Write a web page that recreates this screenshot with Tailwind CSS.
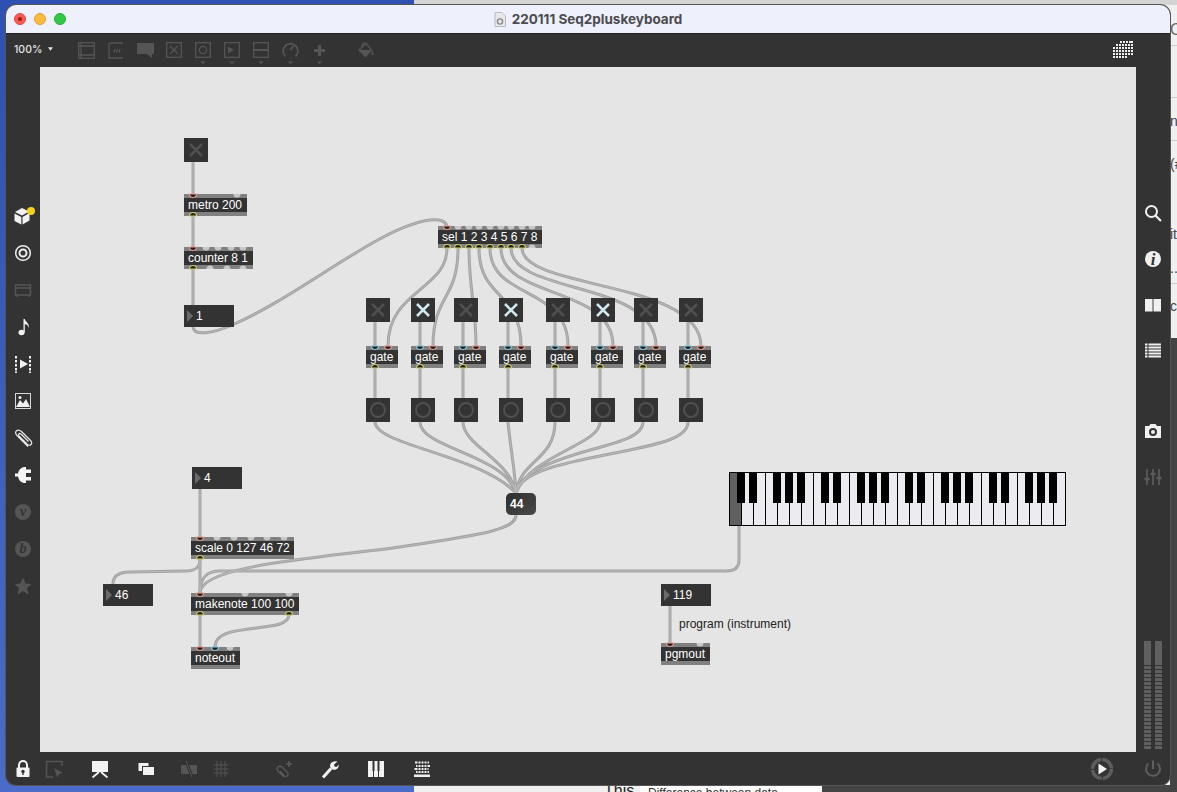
<!DOCTYPE html>
<html><head><meta charset="utf-8"><script src="https://cdn.jsdelivr.net/npm/@tailwindcss/browser@4"></script></head>
<body class="font-['Liberation_Sans',sans-serif]">
<div class="relative w-[1177px] h-[792px] overflow-hidden bg-linear-to-b from-[#2e50b2] to-[#4a6cc8]">
  <!-- window behind -->
  <div class="absolute left-[414px] top-0 w-[763px] h-[792px] bg-[#f0f0f0]">
    <div class="h-[5px] bg-[#d4d4d4]"></div>
    <div class="absolute left-[756px] top-[18px] text-[16px] text-[#666]">C</div>
    <div class="absolute left-[756px] top-[111px] text-[14px] text-[#444]">n</div>
    <div class="absolute left-[756px] top-[154px] text-[14px] text-[#444]">(#</div>
    <div class="absolute left-[756px] top-[224px] text-[14px] text-[#444]">it</div>
    <div class="absolute left-[756px] top-[258px] text-[14px] text-[#444]">...</div>
    <div class="absolute left-[756px] top-[296px] text-[14px] text-[#444]">ce</div>
    <div class="absolute left-[756px] top-[45px] w-[7px] h-px bg-[#ccc]"></div>
    <div class="absolute left-[756px] top-[97px] w-[7px] h-px bg-[#ccc]"></div>
    <div class="absolute left-[756px] top-[140px] w-[7px] h-px bg-[#ccc]"></div>
    <div class="absolute left-[756px] top-[283px] w-[7px] h-px bg-[#ccc]"></div>
    <div class="absolute left-[756px] top-[338px] w-[7px] h-[454px] bg-[#444]"></div>
    <div class="absolute left-[408px] top-[785px] w-[355px] h-[7px] bg-[#444]"></div>
    <div class="absolute left-[190px] top-[779px] text-[16px] text-[#222]">This</div>
    <div class="absolute left-[226px] top-[785px] w-[182px] h-[7px] bg-white border-t border-[#bbb] overflow-hidden"><div class="pl-2 text-[12px] leading-[14px] text-[#333] whitespace-nowrap">Difference between data</div></div>
  </div>

  <!-- main window -->
  <div class="absolute left-[6px] top-[5px] w-[1164px] h-[780px] rounded-[10px] overflow-hidden flex flex-col bg-[#333] shadow-[0_0_0_1px_#555]">
    <!-- title bar -->
    <div class="relative h-[29px] bg-[#eef1fb] border-b border-[#222] flex items-center justify-center shrink-0">
      <div class="absolute left-[8px] top-[8px] flex gap-[8px]">
        <div class="w-3 h-3 rounded-full bg-[#fc5753] border border-[#df4744] flex items-center justify-center"><div class="w-1 h-1 rounded-full bg-[#8f1d18]"></div></div>
        <div class="w-3 h-3 rounded-full bg-[#fdbc40] border border-[#de9f34]"></div>
        <div class="w-3 h-3 rounded-full bg-[#33c748] border border-[#27aa35]"></div>
      </div>
      <svg class="w-3 h-[15px] mr-[6px]" viewBox="0 0 12 15"><path d="M1 .5H8L11.500 4V14.500H1Z" fill="#e8e8ec" stroke="#bbb"/><circle cx="6" cy="9.500" r="2.600" fill="none" stroke="#888" stroke-width="1.400"/></svg>
      <span class="font-['Inter',sans-serif] font-bold text-[13.5px] text-[#4b4b50]">220111 Seq2pluskeyboard</span>
    </div>
    <!-- toolbar -->
    <div class="h-[33px] bg-[#333] flex items-start shrink-0 relative">
      <div class="ml-[8px] mt-[9px] w-[28px] text-[10.5px] font-medium leading-[14px] text-[#e4e4e4] font-['Inter',sans-serif]">100%</div>
      <svg class="ml-[6px] mt-[13px] w-[5px] h-[4px]" viewBox="0 0 7 5"><path d="M0 0H7L3.500 5Z" fill="#e4e4e4"/></svg>
      <svg class="ml-[25px] mt-[8px] w-[17px] h-[17px]" viewBox="0 0 17 17" fill="none" stroke="#555" stroke-width="1.300"><rect x=".7" y=".7" width="15.600" height="15.600"/><path d="M.7 4H16.300M.7 13H16.300M3 1V16" /></svg>
      <svg class="ml-[13px] mt-[8px] w-[16px] h-[17px]" viewBox="0 0 16 17" fill="none" stroke="#555" stroke-width="1.300"><path d="M15 1H3Q1 1 1 3V16H15"/><path d="M6 10.500L7 7M8.500 10.500L9.500 7M11 10.500L12 7"/></svg>
      <svg class="ml-[13px] mt-[9px] w-[17px] h-[16px]" viewBox="0 0 17 16"><path d="M0 0H17V11H15V15L10 11H0Z" fill="#555"/></svg>
      <svg class="ml-[12px] mt-[8px] w-[16px] h-[16px]" viewBox="0 0 16 16" fill="none" stroke="#555" stroke-width="1.300"><rect x=".7" y=".7" width="14.600" height="14.600"/><path d="M4 4L12 12M12 4L4 12"/></svg>
      <svg class="ml-[13px] mt-[8px] w-[16px] h-[22px]" viewBox="0 0 16 22" fill="none" stroke="#555" stroke-width="1.300"><rect x=".7" y=".7" width="14.600" height="14.600"/><circle cx="8" cy="8" r="3.600"/><path d="M5 19.500H11L8 22Z" fill="#555" stroke="none"/></svg>
      <svg class="ml-[13px] mt-[8px] w-[16px] h-[22px]" viewBox="0 0 16 22" fill="none" stroke="#555" stroke-width="1.300"><rect x=".7" y=".7" width="14.600" height="14.600"/><path d="M4 4.500L10 8L4 11.500Z" fill="#555" stroke="none"/><path d="M5 19.500H11L8 22Z" fill="#555" stroke="none"/></svg>
      <svg class="ml-[13px] mt-[8px] w-[16px] h-[22px]" viewBox="0 0 16 22" fill="none" stroke="#555" stroke-width="1.300"><rect x=".7" y=".7" width="14.600" height="14.600"/><path d="M1 8H15" stroke-width="1.800"/><path d="M5 19.500H11L8 22Z" fill="#555" stroke="none"/></svg>
      <svg class="ml-[13px] mt-[8px] w-[17px] h-[22px]" viewBox="0 0 17 22" fill="none" stroke="#555" stroke-width="1.800"><path d="M3.500 14.500A7.400 7.400 0 1 1 13.500 14.500"/><path d="M8.500 8L11.500 3.500"/><path d="M5.500 19.500H11.500L8.500 22Z" fill="#555" stroke="none"/></svg>
      <svg class="ml-[15px] mt-[11px] w-[11px] h-[19px]" viewBox="0 0 11 19"><path d="M4 0H7V4H11V7H7V11H4V7H0V4H4Z" fill="#555"/><path d="M2.500 16.500H8.500L5.500 19Z" fill="#555"/></svg>
      <svg class="ml-[33px] mt-[8px] w-[16px] h-[16px]" viewBox="0 0 16 16"><path d="M1 8L8 1.500L13.500 8L7.500 14.500Z" fill="none" stroke="#555" stroke-width="1.300"/><path d="M1 8L13.500 8L7.500 15Z" fill="#555"/><path d="M4 5V3A3 3 0 0 1 9 2" fill="none" stroke="#555" stroke-width="1.200"/><path d="M14.500 8.500Q16.500 12 14.500 13.500Q12.500 12 14.500 8.500Z" fill="#555"/></svg>
      <svg class="absolute left-[1107px] top-[7px] w-[20px] h-[19px]" viewBox="0 0 20 19" fill="#eee"><g id="gr"><rect x="7" y="0" width="2" height="2"/><rect x="10" y="0" width="2" height="2"/><rect x="13" y="0" width="2" height="2"/><rect x="16" y="0" width="2" height="2"/><rect x="18" y="0" width="2" height="2"/></g><g id="gr2"><rect x="3" y="3" width="2" height="2"/><rect x="6" y="3" width="2" height="2"/><rect x="9" y="3" width="2" height="2"/><rect x="12" y="3" width="2" height="2"/><rect x="15" y="3" width="2" height="2"/><rect x="18" y="3" width="2" height="2"/></g><use href="#gr2" y="3"/><use href="#gr2" y="6"/><use href="#gr2" x="-3" y="3"/><use href="#gr2" x="-3" y="6"/><use href="#gr2" x="-3" y="9"/><use href="#gr2" y="9"/><rect x="0" y="15" width="2" height="2"/><rect x="3" y="15" width="2" height="2"/><rect x="6" y="15" width="2" height="2"/><rect x="9" y="15" width="2" height="2"/><rect x="12" y="15" width="2" height="2"/></svg>
    </div>

    <!-- middle -->
    <div class="flex h-[685px] shrink-0">
      <!-- left sidebar -->
      <div class="w-[34px] flex flex-col items-center gap-[13px] pt-[137px]">
        <svg class="w-6 h-6" viewBox="0 0 24 24" fill="#f2f2f2"><path d="M11 4L18 7.500L11 11.500L4 8Z"/><path d="M3.500 9.500L10.300 13V20.500L3.500 17Z"/><path d="M11.500 13L18.500 9V16.500L11.500 20.500Z"/><circle cx="20" cy="7" r="4" fill="#f2d31b"/></svg>
        <svg class="w-6 h-6" viewBox="0 0 24 24" fill="none" stroke="#ececec"><circle cx="12" cy="12" r="7.300" stroke-width="1.500"/><circle cx="12" cy="12" r="3.500" stroke-width="2"/></svg>
        <svg class="w-6 h-6" viewBox="0 0 24 24" fill="none" stroke="#555" stroke-width="1.500"><rect x="4.500" y="7" width="15" height="10"/><path d="M4.500 10H19.500M6 17V19M18 17V19"/></svg>
        <svg class="w-6 h-6" viewBox="0 0 24 24" fill="#f2f2f2"><ellipse cx="10.500" cy="17.500" rx="3" ry="2.800"/><path d="M12.500 4H13.800C14.300 7 18.500 8 18 13C17 10 15.500 9.500 13.800 9V17.500H12.500Z"/></svg>
        <svg class="w-6 h-6" viewBox="0 0 24 24" fill="#f2f2f2"><path d="M9 7.500L17 12L9 16.500Z"/><rect x="4" y="4" width="2" height="2.500"/><rect x="4" y="8" width="2" height="2.500"/><rect x="4" y="12" width="2" height="2.500"/><rect x="4" y="16" width="2" height="2.500"/><rect x="4" y="19.500" width="2" height="1.500"/><rect x="18" y="4" width="2" height="2.500"/><rect x="18" y="8" width="2" height="2.500"/><rect x="18" y="12" width="2" height="2.500"/><rect x="18" y="16" width="2" height="2.500"/><rect x="18" y="19.500" width="2" height="1.500"/></svg>
        <svg class="w-6 h-6" viewBox="0 0 24 24"><rect x="4.500" y="4.500" width="15" height="15" fill="none" stroke="#d8d8d8"/><path d="M5 18L9 11L12 14.500L15 10L19 18Z" fill="#f0f0f0"/><circle cx="9" cy="8.500" r="1.500" fill="#f0f0f0"/></svg>
        <svg class="w-6 h-6" viewBox="0 0 24 24" fill="none" stroke="#e8e8e8" stroke-width="1.200"><path d="M17 20.500L6 9.500Q3.500 6.500 5.500 4.800Q7.500 3 10.500 5.500L20 15Q21.500 17 20 18.500Q18.500 20 16.500 18.500L8 10Q7 8.500 8 7.700Q9 7 10 8L17.500 15.500"/></svg>
        <svg class="w-6 h-6" viewBox="0 0 24 24" fill="#f5f5f5"><path d="M15 4V20H13Q8 19 7 13.500H4V10.500H7Q8 5 13 4Z"/><rect x="15" y="6.500" width="5" height="3.500"/><rect x="15" y="14" width="5" height="3.500"/></svg>
        <div class="w-6 h-6 flex items-center justify-center"><div class="w-4 h-4 rounded-full bg-[#555] flex items-center justify-center font-['Liberation_Serif',serif] font-bold italic text-[14px] leading-none text-[#333]">v</div></div>
        <div class="w-6 h-6 flex items-center justify-center"><div class="w-4 h-4 rounded-full bg-[#555] flex items-center justify-center font-['Liberation_Serif',serif] font-bold italic text-[14px] leading-none text-[#333]">b</div></div>
        <svg class="w-6 h-6" viewBox="0 0 24 24"><path d="M12 3.500L14.500 9.500L20.500 10L16 14L17.500 20.500L12 17L6.500 20.500L8 14L3.500 10L9.500 9.500Z" fill="#555"/></svg>
      </div>

      <!-- canvas -->
      <div class="relative w-[1096px] h-[685px] bg-[#e5e5e5] text-[12px] leading-[14px] text-white">
        <svg class="absolute inset-0 w-full h-full" viewBox="40 67 1096 685" fill="none" stroke-linecap="round">
          <defs>
            <g id="cables">
              <path d="M193 162V194M193 216V247M193 269V305"/>
              <path d="M193 327C194 336 212 334 232 325C300 296 380 226 430 220C440 219 447 221 447 228"/>
              <path d="M447 248C447 290 388 290 388 346M458 248C458 300 433 295 433 346M469 248C469 290 476 305 476 346M479 248C479 300 521 290 521 346M490 248C490 300 568 285 568 346M501 248C501 300 613 285 613 346M511 248C511 295 656 280 656 346M522 248C522 290 701 280 701 346"/>
              <path d="M375 322V346M420 322V346M463 322V346M508 322V346M555 322V346M600 322V346M643 322V346M688 322V346"/>
              <path d="M375 368V398M420 368V398M463 368V398M508 368V398M555 368V398M600 368V398M643 368V398M688 368V398"/>
              <path d="M688 422C688 438 660 444 620 452C570 462 520 470 516 493M643 422C643 436 620 442 590 450C555 460 520 472 516 493M600 422C600 445 530 455 516 493M555 422C555 460 520 460 516 493M508 422C510 445 515 470 516 493M463 422C463 445 510 460 516 493M420 422C420 448 505 455 516 493M375 422C375 445 480 455 516 493"/>
              <path d="M516 515C516 530 480 535 400 547C320 558 200 565 200 593"/>
              <path d="M739 526V560C739 568 734 571 726 571H220C206 571 200 578 200 593"/>
              <path d="M200 489V537M200 559V593M200 615V647M670 606V643"/>
              <path d="M200 559C200 568 195 571 185 571L130 572C118 572 113 576 113 584"/>
              <path d="M289 615C289 635 215 620 215 647"/>
            </g>
          </defs>
          <use href="#cables" stroke="#a2a2a2" stroke-width="3"/>
          <use href="#cables" stroke="#bababa" stroke-width="1"/>
        </svg>

        <!-- symbols -->
        <svg class="absolute w-0 h-0"><defs>
          <g id="xd"><path d="M1 1L13 13M13 1L1 13" stroke="#505050" stroke-width="2.500" fill="none"/></g>
          <g id="xl"><path d="M1 1L13 13M13 1L1 13" stroke="#cfe9ee" stroke-width="2.500" fill="none"/></g>
        </defs></svg>

        <!-- toggles -->
        <div class="absolute left-[144px] top-[71px] w-6 h-6 bg-[#333] flex items-center justify-center"><svg class="w-[14px] h-[14px]"><use href="#xd"/></svg></div>
        <div class="absolute left-[326px] top-[231px] w-6 h-6 bg-[#333] flex items-center justify-center"><svg class="w-[14px] h-[14px]"><use href="#xd"/></svg></div>
        <div class="absolute left-[371px] top-[231px] w-6 h-6 bg-[#333] flex items-center justify-center"><svg class="w-[14px] h-[14px]"><use href="#xl"/></svg></div>
        <div class="absolute left-[414px] top-[231px] w-6 h-6 bg-[#333] flex items-center justify-center"><svg class="w-[14px] h-[14px]"><use href="#xd"/></svg></div>
        <div class="absolute left-[459px] top-[231px] w-6 h-6 bg-[#333] flex items-center justify-center"><svg class="w-[14px] h-[14px]"><use href="#xl"/></svg></div>
        <div class="absolute left-[506px] top-[231px] w-6 h-6 bg-[#333] flex items-center justify-center"><svg class="w-[14px] h-[14px]"><use href="#xd"/></svg></div>
        <div class="absolute left-[551px] top-[231px] w-6 h-6 bg-[#333] flex items-center justify-center"><svg class="w-[14px] h-[14px]"><use href="#xl"/></svg></div>
        <div class="absolute left-[594px] top-[231px] w-6 h-6 bg-[#333] flex items-center justify-center"><svg class="w-[14px] h-[14px]"><use href="#xd"/></svg></div>
        <div class="absolute left-[639px] top-[231px] w-6 h-6 bg-[#333] flex items-center justify-center"><svg class="w-[14px] h-[14px]"><use href="#xd"/></svg></div>

        <!-- buttons -->
        <div class="absolute left-[326px] top-[331px] w-6 h-6 bg-[#333] flex items-center justify-center"><div class="w-4 h-4 rounded-full border-2 border-[#505050]"></div></div>
        <div class="absolute left-[371px] top-[331px] w-6 h-6 bg-[#333] flex items-center justify-center"><div class="w-4 h-4 rounded-full border-2 border-[#505050]"></div></div>
        <div class="absolute left-[414px] top-[331px] w-6 h-6 bg-[#333] flex items-center justify-center"><div class="w-4 h-4 rounded-full border-2 border-[#505050]"></div></div>
        <div class="absolute left-[459px] top-[331px] w-6 h-6 bg-[#333] flex items-center justify-center"><div class="w-4 h-4 rounded-full border-2 border-[#505050]"></div></div>
        <div class="absolute left-[506px] top-[331px] w-6 h-6 bg-[#333] flex items-center justify-center"><div class="w-4 h-4 rounded-full border-2 border-[#505050]"></div></div>
        <div class="absolute left-[551px] top-[331px] w-6 h-6 bg-[#333] flex items-center justify-center"><div class="w-4 h-4 rounded-full border-2 border-[#505050]"></div></div>
        <div class="absolute left-[594px] top-[331px] w-6 h-6 bg-[#333] flex items-center justify-center"><div class="w-4 h-4 rounded-full border-2 border-[#505050]"></div></div>
        <div class="absolute left-[639px] top-[331px] w-6 h-6 bg-[#333] flex items-center justify-center"><div class="w-4 h-4 rounded-full border-2 border-[#505050]"></div></div>

        <!-- objects -->
        <div class="absolute left-[144px] top-[127px] w-[63px] h-[22px] py-1 bg-[#808080]"><div class="h-[14px] bg-[#333] px-1 whitespace-nowrap">metro 200</div></div>
        <div class="absolute left-[144px] top-[180px] w-[69px] h-[22px] py-1 bg-[#808080]"><div class="h-[14px] bg-[#333] px-1 whitespace-nowrap">counter 8 1</div></div>
        <div class="absolute left-[398px] top-[159px] w-[104px] h-[22px] py-1 bg-[#808080]"><div class="h-[14px] bg-[#333] px-1 whitespace-nowrap">sel 1 2 3 4 5 6 7 8</div></div>
        <div class="absolute left-[326px] top-[279px] w-8 h-[22px] py-1 bg-[#808080]"><div class="h-[14px] bg-[#333] px-1">gate</div></div>
        <div class="absolute left-[371px] top-[279px] w-8 h-[22px] py-1 bg-[#808080]"><div class="h-[14px] bg-[#333] px-1">gate</div></div>
        <div class="absolute left-[414px] top-[279px] w-8 h-[22px] py-1 bg-[#808080]"><div class="h-[14px] bg-[#333] px-1">gate</div></div>
        <div class="absolute left-[459px] top-[279px] w-8 h-[22px] py-1 bg-[#808080]"><div class="h-[14px] bg-[#333] px-1">gate</div></div>
        <div class="absolute left-[506px] top-[279px] w-8 h-[22px] py-1 bg-[#808080]"><div class="h-[14px] bg-[#333] px-1">gate</div></div>
        <div class="absolute left-[551px] top-[279px] w-8 h-[22px] py-1 bg-[#808080]"><div class="h-[14px] bg-[#333] px-1">gate</div></div>
        <div class="absolute left-[594px] top-[279px] w-8 h-[22px] py-1 bg-[#808080]"><div class="h-[14px] bg-[#333] px-1">gate</div></div>
        <div class="absolute left-[639px] top-[279px] w-8 h-[22px] py-1 bg-[#808080]"><div class="h-[14px] bg-[#333] px-1">gate</div></div>
        <div class="absolute left-[151px] top-[470px] w-[103px] h-[22px] py-1 bg-[#808080]"><div class="h-[14px] bg-[#333] px-1 whitespace-nowrap">scale 0 127 46 72</div></div>
        <div class="absolute left-[151px] top-[526px] w-[108px] h-[22px] py-1 bg-[#808080]"><div class="h-[14px] bg-[#333] px-1 whitespace-nowrap">makenote 100 100</div></div>
        <div class="absolute left-[151px] top-[580px] w-[49px] h-[22px] py-1 bg-[#808080]"><div class="h-[14px] bg-[#333] px-1">noteout</div></div>
        <div class="absolute left-[621px] top-[576px] w-[49px] h-[22px] py-1 bg-[#808080]"><div class="h-[14px] bg-[#333] px-1">pgmout</div></div>

        <!-- number boxes -->
        <div class="absolute left-[144px] top-[238px] w-[50px] h-[22px] bg-[#333] flex items-center pl-[3px] gap-[3px]"><svg class="w-[6px] h-3" viewBox="0 0 6 12"><path d="M0 0L6 6L0 12Z" fill="#6a6a6a"/></svg><span>1</span></div>
        <div class="absolute left-[152px] top-[400px] w-[50px] h-[22px] bg-[#333] flex items-center pl-[3px] gap-[3px]"><svg class="w-[6px] h-3" viewBox="0 0 6 12"><path d="M0 0L6 6L0 12Z" fill="#6a6a6a"/></svg><span>4</span></div>
        <div class="absolute left-[63px] top-[517px] w-[50px] h-[22px] bg-[#333] flex items-center pl-[3px] gap-[3px]"><svg class="w-[6px] h-3" viewBox="0 0 6 12"><path d="M0 0L6 6L0 12Z" fill="#6a6a6a"/></svg><span>46</span></div>
        <div class="absolute left-[621px] top-[517px] w-[50px] h-[22px] bg-[#333] flex items-center pl-[3px] gap-[3px]"><svg class="w-[6px] h-3" viewBox="0 0 6 12"><path d="M0 0L6 6L0 12Z" fill="#6a6a6a"/></svg><span>119</span></div>
        <div class="absolute left-[466px] top-[426px] w-[30px] h-[22px] rounded-[5px] bg-linear-to-br from-[#2e2e2e] to-[#4a4a4a] flex items-center pl-1 font-bold">44</div>

        <div class="absolute left-[639px] top-[550px] text-[#222] whitespace-nowrap">program (instrument)</div>

        <!-- keyboard -->
        <div class="absolute left-[689px] top-[405px] w-[337px] h-[54px] bg-black border border-black flex gap-px">
          <div class="w-[11px] shrink-0 bg-[#606060]"></div>
          <div class="w-[11px] shrink-0 bg-[#ebebf0]"></div><div class="w-[11px] shrink-0 bg-[#ebebf0]"></div><div class="w-[11px] shrink-0 bg-[#ebebf0]"></div><div class="w-[11px] shrink-0 bg-[#ebebf0]"></div><div class="w-[11px] shrink-0 bg-[#ebebf0]"></div><div class="w-[11px] shrink-0 bg-[#ebebf0]"></div><div class="w-[11px] shrink-0 bg-[#ebebf0]"></div><div class="w-[11px] shrink-0 bg-[#ebebf0]"></div><div class="w-[11px] shrink-0 bg-[#ebebf0]"></div><div class="w-[11px] shrink-0 bg-[#ebebf0]"></div><div class="w-[11px] shrink-0 bg-[#ebebf0]"></div><div class="w-[11px] shrink-0 bg-[#ebebf0]"></div><div class="w-[11px] shrink-0 bg-[#ebebf0]"></div><div class="w-[11px] shrink-0 bg-[#ebebf0]"></div><div class="w-[11px] shrink-0 bg-[#ebebf0]"></div><div class="w-[11px] shrink-0 bg-[#ebebf0]"></div><div class="w-[11px] shrink-0 bg-[#ebebf0]"></div><div class="w-[11px] shrink-0 bg-[#ebebf0]"></div><div class="w-[11px] shrink-0 bg-[#ebebf0]"></div><div class="w-[11px] shrink-0 bg-[#ebebf0]"></div><div class="w-[11px] shrink-0 bg-[#ebebf0]"></div><div class="w-[11px] shrink-0 bg-[#ebebf0]"></div><div class="w-[11px] shrink-0 bg-[#ebebf0]"></div><div class="w-[11px] shrink-0 bg-[#ebebf0]"></div><div class="w-[11px] shrink-0 bg-[#ebebf0]"></div><div class="w-[11px] shrink-0 bg-[#ebebf0]"></div><div class="w-[11px] shrink-0 bg-[#ebebf0]"></div>
        </div>
        <svg class="absolute left-[689px] top-[405px] w-[337px] h-[54px]" viewBox="729 472 337 54" fill="#000">
          <rect x="737" y="472" width="8" height="31"/><rect x="749" y="472" width="8" height="31"/><rect x="773" y="472" width="8" height="31"/><rect x="785" y="472" width="8" height="31"/><rect x="797" y="472" width="8" height="31"/><rect x="821" y="472" width="8" height="31"/><rect x="833" y="472" width="8" height="31"/><rect x="857" y="472" width="8" height="31"/><rect x="869" y="472" width="8" height="31"/><rect x="881" y="472" width="8" height="31"/><rect x="905" y="472" width="8" height="31"/><rect x="917" y="472" width="8" height="31"/><rect x="941" y="472" width="8" height="31"/><rect x="953" y="472" width="8" height="31"/><rect x="965" y="472" width="8" height="31"/><rect x="989" y="472" width="8" height="31"/><rect x="1001" y="472" width="8" height="31"/><rect x="1025" y="472" width="8" height="31"/><rect x="1037" y="472" width="8" height="31"/><rect x="1049" y="472" width="8" height="31"/>
        </svg>

        <!-- ports -->
        <svg class="absolute inset-0 w-full h-full" viewBox="40 67 1096 685">
          <defs>
            <path id="pi" d="M-3.500 0A3.500 3.500 0 0 0 3.500 0Z" fill="#222" stroke="#e59a8c" stroke-width="1.200"/>
            <path id="bi" d="M-3.500 0A3.500 3.500 0 0 0 3.500 0Z" fill="#222" stroke="#86c6d8" stroke-width="1.200"/>
            <path id="ou" d="M-3.500 0A3.500 3.500 0 0 1 3.500 0Z" fill="#222" stroke="#c9c864" stroke-width="1.200"/>
            <path id="gi" d="M-3.500 0A3.500 3.500 0 0 0 3.500 0Z" fill="#c8c8c8"/>
            <path id="go" d="M-3.500 0A3.500 3.500 0 0 1 3.500 0Z" fill="#c8c8c8"/>
          </defs>
          <use href="#pi" x="193" y="194"/><use href="#gi" x="237" y="194"/><use href="#ou" x="193" y="216"/>
          <use href="#pi" x="193" y="247"/><use href="#gi" x="206" y="247"/><use href="#gi" x="218" y="247"/><use href="#gi" x="231" y="247"/><use href="#gi" x="243" y="247"/>
          <use href="#ou" x="193" y="269"/><use href="#go" x="210" y="269"/><use href="#go" x="227" y="269"/><use href="#go" x="243" y="269"/>
          <use href="#pi" x="447" y="226"/><use href="#gi" x="458" y="226"/><use href="#gi" x="469" y="226"/><use href="#gi" x="479" y="226"/><use href="#gi" x="490" y="226"/><use href="#gi" x="501" y="226"/><use href="#gi" x="511" y="226"/><use href="#gi" x="522" y="226"/><use href="#gi" x="532" y="226"/>
          <use href="#ou" x="447" y="248"/><use href="#ou" x="458" y="248"/><use href="#ou" x="469" y="248"/><use href="#ou" x="479" y="248"/><use href="#ou" x="490" y="248"/><use href="#ou" x="501" y="248"/><use href="#ou" x="511" y="248"/><use href="#ou" x="522" y="248"/><use href="#go" x="532" y="248"/>
          <use href="#bi" x="375" y="346"/><use href="#pi" x="388" y="346"/><use href="#ou" x="375" y="368"/>
          <use href="#bi" x="420" y="346"/><use href="#pi" x="433" y="346"/><use href="#ou" x="420" y="368"/>
          <use href="#bi" x="463" y="346"/><use href="#pi" x="476" y="346"/><use href="#ou" x="463" y="368"/>
          <use href="#bi" x="508" y="346"/><use href="#pi" x="521" y="346"/><use href="#ou" x="508" y="368"/>
          <use href="#bi" x="555" y="346"/><use href="#pi" x="568" y="346"/><use href="#ou" x="555" y="368"/>
          <use href="#bi" x="600" y="346"/><use href="#pi" x="613" y="346"/><use href="#ou" x="600" y="368"/>
          <use href="#bi" x="643" y="346"/><use href="#pi" x="656" y="346"/><use href="#ou" x="643" y="368"/>
          <use href="#bi" x="688" y="346"/><use href="#pi" x="701" y="346"/><use href="#ou" x="688" y="368"/>
          <use href="#pi" x="200" y="537"/><use href="#gi" x="217" y="537"/><use href="#gi" x="234" y="537"/><use href="#gi" x="251" y="537"/><use href="#gi" x="267" y="537"/><use href="#gi" x="284" y="537"/><use href="#ou" x="200" y="559"/>
          <use href="#pi" x="200" y="593"/><use href="#gi" x="245" y="593"/><use href="#gi" x="289" y="593"/><use href="#ou" x="200" y="615"/><use href="#ou" x="289" y="615"/>
          <use href="#pi" x="200" y="647"/><use href="#bi" x="215" y="647"/><use href="#gi" x="230" y="647"/>
          <use href="#pi" x="670" y="643"/><use href="#gi" x="700" y="643"/>
        </svg>
      </div>

      <!-- right sidebar -->
      <div class="w-[34px] flex flex-col items-center pt-[134px] pb-[3px]">
        <svg class="w-6 h-6" viewBox="0 0 24 24" fill="none" stroke="#f0f0f0"><circle cx="10.500" cy="10.500" r="5.500" stroke-width="2"/><path d="M14.500 14.500L20 20" stroke-width="2.200"/></svg>
        <div class="mt-[22px] w-6 h-6 flex items-center justify-center"><div class="w-4 h-4 rounded-full bg-[#f0f0f0] flex items-center justify-center font-['Liberation_Serif',serif] font-bold italic text-[17px] leading-none text-[#333]">i</div></div>
        <svg class="mt-[22px] w-6 h-6" viewBox="0 0 24 24"><rect x="4" y="6" width="7" height="12.500" fill="#f0f0f0"/><rect x="13" y="6" width="7" height="12.500" fill="#f0f0f0"/><rect x="11" y="6" width="2" height="12.500" fill="#999"/></svg>
        <svg class="mt-[22px] w-6 h-6" viewBox="0 0 24 24" fill="#f0f0f0"><rect x="4" y="4.500" width="2.500" height="2"/><rect x="7.500" y="4.500" width="12.500" height="2"/><rect x="4" y="7.500" width="2.500" height="2"/><rect x="7.500" y="7.500" width="12.500" height="2"/><rect x="4" y="10.500" width="2.500" height="2"/><rect x="7.500" y="10.500" width="12.500" height="2"/><rect x="4" y="13.500" width="2.500" height="2"/><rect x="7.500" y="13.500" width="12.500" height="2"/><rect x="4" y="16.500" width="2.500" height="2"/><rect x="7.500" y="16.500" width="12.500" height="2"/></svg>
        <svg class="mt-[56px] w-6 h-6" viewBox="0 0 24 24"><path d="M4 7H8L9.500 5H14.500L16 7H20V19H4Z" fill="#f0f0f0"/><circle cx="12" cy="13" r="4" fill="#333"/><circle cx="12" cy="13" r="2" fill="#f0f0f0"/></svg>
        <svg class="mt-[22px] w-6 h-6" viewBox="0 0 24 24" fill="none" stroke="#5c5c5c" stroke-width="1.700"><path d="M6 4V20M12 4V20M18 4V20"/><path d="M3.500 14H8.500M9.500 9H14.500M15.500 13H20.500" stroke-width="2.500"/></svg>
        <div class="mt-auto flex gap-1 w-[18px] h-[108px]">
          <div class="w-[7px] flex flex-col gap-px"><div class="h-[24px] bg-[#606060]"></div><div class="flex-1 bg-[repeating-linear-gradient(to_bottom,#606060_0,#606060_3px,#333_3px,#333_4px)]"></div></div>
          <div class="w-[7px] flex flex-col gap-px"><div class="h-[24px] bg-[#606060]"></div><div class="flex-1 bg-[repeating-linear-gradient(to_bottom,#606060_0,#606060_3px,#333_3px,#333_4px)]"></div></div>
        </div>
      </div>
    </div>

    <!-- bottom bar -->
    <div class="h-[33px] flex items-center pl-[5px] shrink-0">
      <svg class="w-6 h-6" viewBox="0 0 24 24"><path d="M8 11V8A4 4 0 0 1 16 8V11" fill="none" stroke="#f2f2f2" stroke-width="2"/><rect x="5.500" y="10.500" width="13" height="9.500" rx="1" fill="#f2f2f2"/><circle cx="12" cy="14.500" r="1.700" fill="#333"/><rect x="11.300" y="15" width="1.400" height="3" fill="#333"/></svg>
      <svg class="ml-[7px] w-6 h-6" viewBox="0 0 24 24" fill="none" stroke="#555" stroke-width="1.500"><path d="M20 9V4.500H4.500V20H11"/><path d="M12 11L21 16L17 17L15.500 21Z" fill="#555" stroke="none"/></svg>
      <svg class="ml-[22px] w-6 h-6" viewBox="0 0 24 24" fill="#f2f2f2"><rect x="4" y="4" width="16" height="11"/><path d="M11 15L4.500 20.500M13 15L19.500 20.500" stroke="#f2f2f2" stroke-width="1.800"/></svg>
      <svg class="ml-[22px] w-6 h-6" viewBox="0 0 24 24" fill="#f2f2f2"><rect x="4.500" y="6" width="10" height="8"/><rect x="8.500" y="9.500" width="12" height="9" stroke="#333"/></svg>
      <svg class="ml-[19px] w-6 h-6" viewBox="0 0 24 24"><rect x="4" y="8" width="16" height="9" fill="#555"/><path d="M9 3.500L15 20.500" stroke="#333" stroke-width="3"/><path d="M9 3.500L15 20.500" stroke="#555"/></svg>
      <svg class="ml-[8px] w-6 h-6" viewBox="0 0 24 24" fill="none" stroke="#555"><path d="M8 4V20M12 4V20M16 4V20M4.500 8H19.500M4.500 12H19.500M4.500 16H19.500"/></svg>
      <svg class="ml-[39px] w-6 h-6" viewBox="0 0 24 24" fill="none" stroke="#5a5a5a" stroke-width="1.300"><path d="M12 20L6 14Q4 11.500 6 10Q8 8.500 10 10L15.500 15.500Q17 18 15 19Q13.500 20 12 18.500L8 14"/><path d="M17 4V10M14 7H20" stroke-width="1.600"/></svg>
      <svg class="ml-[22px] w-6 h-6" viewBox="0 0 24 24"><path d="M5 20.500L13 11.500" stroke="#f2f2f2" stroke-width="3"/><path d="M19.500 4.500L16 7.500L16.500 9.500L18.500 10L20.800 7.500Q21 11 18 12.500Q15 13.500 13 11.500Q11 9 13 6Q15.500 3.500 19.500 4.500Z" fill="#f2f2f2"/></svg>
      <svg class="ml-[22px] w-6 h-6" viewBox="0 0 24 24"><rect x="4" y="4" width="16" height="16" fill="#f2f2f2"/><path d="M8.500 4H10.500V14H8.500ZM13.500 4H15.500V14H13.500Z" fill="#333"/><path d="M9.500 14V20M14.500 14V20" stroke="#333"/></svg>
      <svg class="ml-[22px] w-6 h-6" viewBox="0 0 24 24" fill="#f0f0f0"><path d="M5 4.500H19V6.500H5ZM6 8H20V10H6ZM4.500 11H18.500V13H4.500ZM6 14H19V16H6ZM4 17.500H20V20H4Z"/><path d="M8 4V16M11 4V16M14 4V16M17 4V16" stroke="#333"/></svg>
      <svg class="ml-auto w-6 h-6" viewBox="0 0 24 24"><circle cx="12" cy="12" r="9.500" fill="none" stroke="#5e5e5e" stroke-width="3.500" stroke-dasharray="13.900 1"/><path d="M8.500 6.500L17 12L8.500 17.500Z" fill="#f2f2f2"/></svg>
      <svg class="ml-[27px] mr-[5px] w-6 h-6" viewBox="0 0 24 24" fill="none" stroke="#5e5e5e" stroke-width="2"><path d="M12 3.500V12"/><path d="M7.500 6.500A7 7 0 1 0 16.500 6.500"/></svg>
    </div>
  </div>
</div>
</body></html>
